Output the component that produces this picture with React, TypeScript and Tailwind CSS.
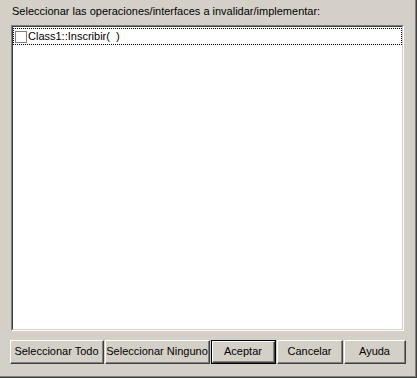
import React from "react";

function Btn({ label, w, def }: { label: string; w: string; def?: boolean }) {
  const inner = (
    <div className="h-full w-full border-t border-l border-t-white border-l-white border-b border-r border-b-[#404040] border-r-[#404040]">
      <div className="h-full w-full border-b border-r border-b-[#808080] border-r-[#808080] flex items-center justify-center text-[11px] text-black leading-none">
        {label}
      </div>
    </div>
  );
  if (def) {
    return (
      <div className={`${w} h-[24px] border border-black`}>{inner}</div>
    );
  }
  return <div className={`${w} h-[24px]`}>{inner}</div>;
}

export default function App() {
  return (
    <div
      className="w-[417px] h-[378px] border-r border-b border-[#404040] bg-[#d4d0c8]"
      style={{ fontFamily: '"Liberation Sans", Arial, sans-serif' }}
    >
      <div className="w-full h-full border-r border-b border-[#808080] flex flex-col">
        <div className="pl-[12px] pt-[5px] h-[25px] text-[11px] leading-[13px] text-black">
          Seleccionar las operaciones/interfaces a invalidar/implementar:
        </div>
        <div className="ml-[11px] w-[393px] h-[306px] border-t border-l border-t-[#808080] border-l-[#808080] border-b border-r border-b-white border-r-white">
          <div className="w-full h-full border-t border-l border-t-[#404040] border-l-[#404040] border-b border-r border-b-[#d4d0c8] border-r-[#d4d0c8] bg-white pt-[1px] pl-[0px] pr-[0px]">
            <div className="h-[17px] border border-dotted border-black flex items-center pl-[1px]">
              <div className="w-[12px] h-[12px] border border-[#808080] bg-white mr-[1px]" />
              <span className="text-[11px] leading-none text-black whitespace-pre">Class1::Inscribir(  )</span>
            </div>
          </div>
        </div>
        <div className="flex items-start pl-[10px] pt-[9px]">
          <Btn label="Seleccionar Todo" w="w-[94px]" />
          <div className="w-[1px]" />
          <Btn label="Seleccionar Ninguno" w="w-[105px]" />
          <div className="w-[1px]" />
          <Btn label="Aceptar" w="w-[65px]" def />
          <div className="w-[1px]" />
          <Btn label="Cancelar" w="w-[66px]" />
          <div className="w-[1px]" />
          <Btn label="Ayuda" w="w-[62px]" />
        </div>
      </div>
    </div>
  );
}
